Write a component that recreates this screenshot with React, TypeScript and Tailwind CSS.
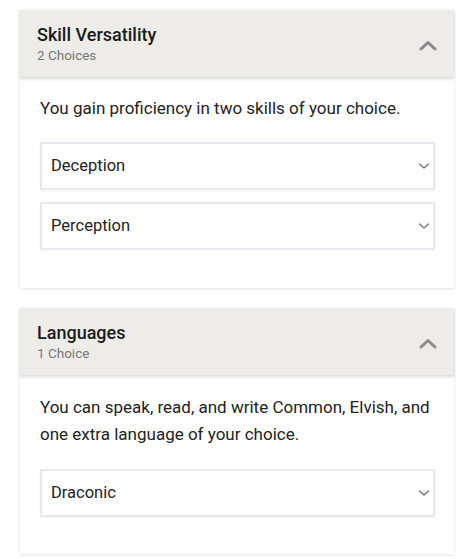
import React from "react";

function ChevronUp() {
  return (
    <svg width="20" height="12" viewBox="0 0 20 12" className="block">
      <path d="M3 10 L10 3.5 L17 10" fill="none" stroke="#8a8a8a" strokeWidth="3" strokeLinecap="round" strokeLinejoin="round" />
    </svg>
  );
}

function ChevronDown() {
  return (
    <svg width="12" height="8" viewBox="0 0 12 8" className="block">
      <path d="M1.5 2 L6 6 L10.5 2" fill="none" stroke="#6b6b6b" strokeWidth="1.2" strokeLinecap="round" strokeLinejoin="round" />
    </svg>
  );
}

function Select({ value }: { value: string }) {
  return (
    <div className="flex h-[48px] items-center justify-between border-2 border-[#e6e9ef] bg-white pl-[9px] pr-[3px] shadow-[0_1px_2px_rgba(0,0,0,0.05)]">
      <span className="text-[16.5px] text-[#222]">{value}</span>
      <ChevronDown />
    </div>
  );
}

function Card({
  title,
  sub,
  children,
}: {
  title: string;
  sub: string;
  children: React.ReactNode;
}) {
  return (
    <div className="mx-[20px] w-[434px] bg-white shadow-[0_1px_3px_rgba(0,0,0,0.12)]">
      <div className="flex h-[67px] items-center justify-between bg-[#eeece9] pl-[17px] pr-[16px] shadow-[0_2px_3px_rgba(0,0,0,0.15)]">
        <div className="flex flex-col">
          <span className="text-[18px] font-medium leading-[22px] text-[#1a1a1a]">{title}</span>
          <span className="text-[13.5px] leading-[18px] text-[#777]">{sub}</span>
        </div>
        <div className="pt-[2px]">
          <ChevronUp />
        </div>
      </div>
      {children}
    </div>
  );
}

export default function App() {
  return (
    <div
      className="min-h-[559px] w-[474px] bg-white pt-[10px]"
      style={{ fontFamily: "Roboto, 'Noto Sans', sans-serif" }}
    >
      <Card title="Skill Versatility" sub="2 Choices">
        <div className="pl-[20px] pr-[19px] pt-[18px] pb-[38px]">
          <p className="text-[17px] leading-[27px] text-[#222]">
            You gain proficiency in two skills of your choice.
          </p>
          <div className="mt-[20px] flex flex-col gap-[12px]">
            <Select value="Deception" />
            <Select value="Perception" />
          </div>
        </div>
      </Card>
      <div className="h-[20px]" />
      <Card title="Languages" sub="1 Choice">
        <div className="pl-[20px] pr-[19px] pt-[19px] pb-[37px]">
          <p className="text-[17px] leading-[27px] text-[#222]">
            You can speak, read, and write Common, Elvish, and one extra language of your choice.
          </p>
          <div className="mt-[21px]">
            <Select value="Draconic" />
          </div>
        </div>
      </Card>
    </div>
  );
}
